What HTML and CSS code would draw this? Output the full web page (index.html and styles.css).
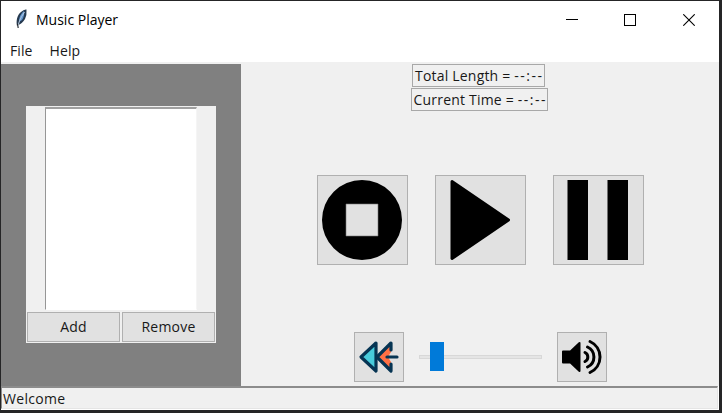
FILE: index.html
```html
<!DOCTYPE html>
<html lang="en">
<head>
<meta charset="utf-8">
<title>Music Player</title>
<link rel="stylesheet" href="styles.css">
</head>
<body>
<div class="window">
  <header class="titlebar">
    <svg class="feather" width="14" height="20" viewBox="0 0 14 20">
      <path d="M2 17C1 12 2 6 6 3Q9 0 11.500 .5Q12 6 10 10Q7 15 3 16Z" fill="#25394f"/>
      <path d="M4 13Q4 6 9 2Q10 6 7 11Z" fill="#6297d2"/>
      <path d="M3 19Q3 12 9.500 3" fill="none" stroke="#b5c7da" stroke-width="1"/>
      <path d="M2.500 15L3.200 19" stroke="#222" stroke-width="1"/>
    </svg>
    <h1 class="title">Music Player</h1>
    <div class="controls">
      <svg width="12" height="12" viewBox="0 0 12 12" shape-rendering="crispEdges"><path d="M0 5.500H12" stroke="#000"/></svg>
      <svg width="12" height="12" viewBox="0 0 12 12" shape-rendering="crispEdges"><path d="M.5 .5H11.500V11.500H.5Z" fill="none" stroke="#000"/></svg>
      <svg width="12" height="12" viewBox="0 0 12 12"><path d="M.3 .3L11.700 11.700M11.700 .3L.3 11.700" stroke="#000" stroke-width="1.100"/></svg>
    </div>
  </header>
  <nav class="menu"><span class="file">File</span><span class="help">Help</span></nav>
  <main class="body">
    <aside class="side">
      <div class="playlist">
        <div class="listbox"></div>
        <div class="actions"><button class="btn add">Add</button><button class="btn remove">Remove</button></div>
      </div>
    </aside>
    <section class="player">
      <div class="label total">Total Length = <span class="time">--:--</span></div>
      <div class="label current">Current Time = <span class="time">--:--</span></div>
      <div class="transport">
        <button class="btn big" aria-label="Stop">
          <svg width="90" height="90" viewBox="0 0 90 90"><path fill-rule="evenodd" d="M45 5A40 40 0 1 1 45 85A40 40 0 1 1 45 5ZM29 29V61H61V29Z"/><path d="M29 29H61V61H29Z" fill="none" stroke="#777" stroke-width=".6"/></svg>
        </button>
        <button class="btn big" aria-label="Play">
          <svg width="90" height="90" viewBox="0 0 90 90"><path d="M17 6.500L73.500 45L17 83.500Z" stroke="#000" stroke-width="3" stroke-linejoin="round"/></svg>
        </button>
        <button class="btn big" aria-label="Pause">
          <svg width="90" height="90" viewBox="0 0 90 90"><path d="M14.500 5H35V85H14.500ZM54.500 5H75V85H54.500Z"/></svg>
        </button>
      </div>
      <div class="bottom">
        <button class="btn small" aria-label="Rewind">
          <svg width="50" height="50" viewBox="0 0 50 50">
            <g stroke="#063453" stroke-width="3.200" stroke-linejoin="round" stroke-linecap="round">
              <path d="M24 25L37 12V20L34 25L37 30V38Z" fill="#ff7044" stroke="none"/>
              <path d="M37 18V11L23 25L37 39V32" fill="none"/>
              <path d="M22 11L7 25L22 39Z" fill="#48ccdc"/>
              <path d="M33 25H43" fill="none"/>
            </g>
          </svg>
        </button>
        <div class="slider"><div class="thumb"></div></div>
        <button class="btn small" aria-label="Volume">
          <svg width="50" height="50" viewBox="0 0 50 50">
            <path d="M6 19.500H13.500L22.500 11V39L13.500 30.500H6Z" stroke="#000" stroke-width="2" stroke-linejoin="round"/>
            <g fill="none" stroke="#000" stroke-width="3" stroke-linecap="round"><path d="M28 20.500A5 5 0 0 1 28 29.500"/><path d="M30.500 15A11 11 0 0 1 30.500 35"/><path d="M33 9.500A17 17 0 0 1 33 40.500"/></g>
          </svg>
        </button>
      </div>
    </section>
  </main>
  <footer class="status"><span>Welcome</span></footer>
</div>
</body>
</html>
```
FILE: styles.css
```css
* { box-sizing: border-box; }
body { margin: 0; width: 722px; height: 413px; overflow: hidden; background: #252526; font: 14px/20px "Open Sans", "Noto Sans", sans-serif; color: #181818; }
.window { width: 718px; height: 409px; margin: 1px 3px 3px 1px; display: flex; flex-direction: column; background: #fff; }
.titlebar { height: 39px; display: flex; align-items: flex-start; padding: 8px 24px 0 14px; }
.feather { flex: none; }
.title { margin: 1px 0 0 7px; font-size: 14px; line-height: 20px; font-weight: 400; letter-spacing: 0; color: #000; }
.controls { display: flex; gap: 47px; margin: 5px 0 0 auto; }
.controls svg:first-child { margin-right: -1px; }
.menu { height: 22px; display: flex; gap: 17px; padding: 1px 0 0 9px; font-size: 14px; line-height: 20px; letter-spacing: .1px; }
.body { height: 324px; display: flex; border-top: 2px solid #f0f0f0; background: #f0f0f0; }
.side { width: 240px; background: #808080; padding: 42px 25px 0; }
.playlist { height: 237px; background: #f0f0f0; padding: 1px 1px 0; }
.listbox { width: 152px; height: 203px; margin-left: 18px; background: #fff; border: solid; border-width: 2px 1px 1px; border-color: #a0a0a0 #f5f5f5 #fff #969696; }
.actions { display: flex; gap: 2px; padding-top: 2px; }
.btn { display: flex; align-items: center; justify-content: center; border: 1px solid #b0b0b0; border-radius: 0; padding: 0; margin: 0; background: #e1e1e1; color: #181818; font: inherit; }
.btn svg { flex: none; display: block; }
.actions .btn { width: 93px; height: 30px; letter-spacing: .25px; }
.player { flex: 1; display: flex; flex-direction: column; align-items: center; }
.label { height: 23px; border: 1px solid #a8a8a8; line-height: 22px; white-space: nowrap; overflow: hidden; padding-left: 2px; letter-spacing: .2px; }
.time { letter-spacing: 1.5px; }
.total { width: 133px; margin-right: 3px; }
.current { width: 137px; margin: 1px 2px 0 0; }
.transport { display: flex; gap: 27px; margin-top: 64px; }
.big { width: 91px; height: 90px; }
.bottom { display: flex; align-items: center; margin-top: 67px; }
.small { width: 50px; height: 50px; }
.slider { width: 123px; height: 4px; margin: 0 15px; border: 1px solid #d8d8d8; background: #e5e5e5; }
.thumb { width: 14px; height: 29px; margin: -14px 0 0 10px; background: #007ad9; }
.status { height: 23px; margin-right: 1px; border: solid; border-width: 2px 1px 1px; border-color: #8c8c8c #e5e5e5 #e5e5e5 #8c8c8c; background: #f0f0f0; line-height: 21px; padding-left: 1px; letter-spacing: .3px; }
```
